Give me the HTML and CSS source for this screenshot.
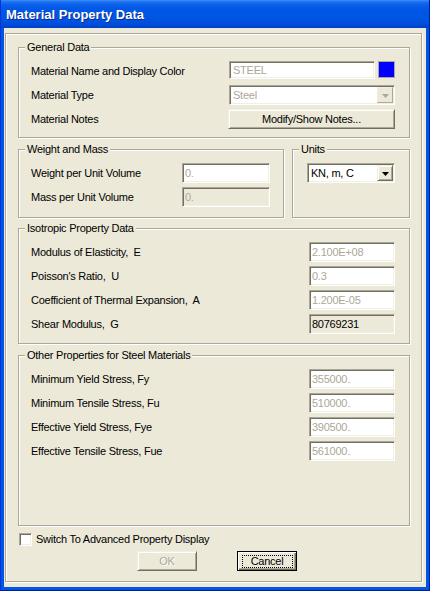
FILE: index.html
```html
<!DOCTYPE html>
<html>
<head>
<meta charset="utf-8">
<link rel="stylesheet" href="styles.css">
</head>
<body>
<div class="window">
  <div class="titlebar"><span class="title">Material Property Data</span></div>
  <div class="client">
    <div class="panel">
      <fieldset class="group general">
        <legend>General Data</legend>
        <div class="rows">
          <div class="row">
            <span class="label">Material Name and Display Color</span>
            <div class="name-ctrl">
              <div class="textbox dim name">STEEL</div>
              <div class="swatch"></div>
            </div>
          </div>
          <div class="row">
            <span class="label">Material Type</span>
            <div class="combo disabled wide">
              <span class="value">Steel</span>
              <span class="drop"><svg width="7" height="4" viewBox="0 0 7 4"><polygon points="0,0 7,0 3.5,4" fill="#aca899"/></svg></span>
            </div>
          </div>
          <div class="row">
            <span class="label">Material Notes</span>
            <div class="btn notes">Modify/Show Notes...</div>
          </div>
        </div>
      </fieldset>

      <div class="pair">
        <fieldset class="group weight">
          <legend>Weight and Mass</legend>
          <div class="rows">
            <div class="row">
              <span class="label">Weight per Unit Volume</span>
              <div class="textbox dim w88">0.</div>
            </div>
            <div class="row">
              <span class="label">Mass per Unit Volume</span>
              <div class="textbox dim ro w88">0.</div>
            </div>
          </div>
        </fieldset>
        <fieldset class="group units">
          <legend>Units</legend>
          <div class="rows">
            <div class="row unitrow">
              <div class="combo w88">
                <span class="value">KN, m, C</span>
                <span class="drop raised"><svg width="7" height="4" viewBox="0 0 7 4"><polygon points="0,0 7,0 3.5,4" fill="#000"/></svg></span>
              </div>
            </div>
          </div>
        </fieldset>
      </div>

      <fieldset class="group iso">
        <legend>Isotropic Property Data</legend>
        <div class="rows">
          <div class="row">
            <span class="label">Modulus of Elasticity,&nbsp; E</span>
            <div class="textbox dim w86">2.100E+08</div>
          </div>
          <div class="row">
            <span class="label">Poisson's Ratio,&nbsp; U</span>
            <div class="textbox dim w86">0.3</div>
          </div>
          <div class="row">
            <span class="label">Coefficient of Thermal Expansion,&nbsp; A</span>
            <div class="textbox dim w86">1.200E-05</div>
          </div>
          <div class="row">
            <span class="label">Shear Modulus,&nbsp; G</span>
            <div class="textbox ro w86">80769231</div>
          </div>
        </div>
      </fieldset>

      <fieldset class="group other">
        <legend>Other Properties for Steel Materials</legend>
        <div class="rows">
          <div class="row">
            <span class="label">Minimum Yield Stress, Fy</span>
            <div class="textbox dim w86">355000.</div>
          </div>
          <div class="row">
            <span class="label">Minimum Tensile Stress, Fu</span>
            <div class="textbox dim w86">510000.</div>
          </div>
          <div class="row">
            <span class="label">Effective Yield Stress, Fye</span>
            <div class="textbox dim w86">390500.</div>
          </div>
          <div class="row">
            <span class="label">Effective Tensile Stress, Fue</span>
            <div class="textbox dim w86">561000.</div>
          </div>
        </div>
      </fieldset>

      <div class="checkrow">
        <span class="checkbox"></span>
        <span class="checklabel">Switch To Advanced Property Display</span>
      </div>

      <div class="buttons">
        <div class="btn small disabled-btn">OK</div>
        <div class="btn small default-btn"><span class="focus">Cancel</span></div>
      </div>
    </div>
  </div>
</div>
</body>
</html>
```

FILE: styles.css
```css
html, body {
  margin: 0;
  padding: 0;
  background: #ece9d8;
}

body {
  font-family: "Liberation Sans", Arial, sans-serif;
  font-size: 11px;
  letter-spacing: -0.25px;
  color: #000;
}

.window {
  width: 430px;
  height: 591px;
  background: #0055e5;
  display: flex;
  flex-direction: column;
  box-sizing: border-box;
  border-left: 1px solid #0831d9;
  border-right: 1px solid #001ea0;
  border-bottom: 1px solid #001ea0;
}

.titlebar {
  height: 28px;
  flex: none;
  display: flex;
  align-items: center;
  padding-left: 5px;
  background: linear-gradient(to bottom, #3d8ff8 0px, #1a6ff0 2px, #0a5fea 5px, #0057e5 10px, #0054e2 20px, #004bd8 25px, #003fc5 28px);
}

.title {
  font-family: "Liberation Sans", Arial, sans-serif;
  font-size: 13px;
  font-weight: bold;
  letter-spacing: 0;
  color: #fff;
  text-shadow: 1px 1px 0 #0a2a8c;
  padding-top: 1px;
}

.client {
  flex: 1;
  margin: 0 3px 3px 3px;
  background: #ece9d8;
  display: flex;
  flex-direction: column;
}

.panel {
  margin: 5px 4px 0 1px;
  border: 1px solid #aca899;
  box-shadow: inset 1px 1px 0 #fff, 1px 1px 0 #fff;
  padding: 7px 11px 10px 12px;
  display: flex;
  flex-direction: column;
}

.group {
  margin: 0;
  padding: 7px 14px 9px 6px;
  border: 1px solid #aca899;
  box-shadow: inset 1px 1px 0 #fff, 1px 1px 0 #fff;
  min-width: 0;
}

.group legend {
  padding: 0 2px;
  margin: 0;
  font-size: 11px;
  line-height: 13px;
  height: 13px;
  background: #ece9d8;
}

.rows {
  display: flex;
  flex-direction: column;
  gap: 4px;
  padding-left: 6px;
}

.row {
  display: flex;
  align-items: center;
  height: 20px;
}

.label {
  flex: 1;
  line-height: 20px;
  white-space: nowrap;
}

.general {
  padding-bottom: 8px;
}

.pair {
  display: flex;
  gap: 8px;
  margin-top: 5px;
}

.weight {
  flex: none;
  width: 266px;
  box-sizing: border-box;
  padding-right: 13px;
  padding-bottom: 10px;
}

.units {
  flex: 1;
  padding-bottom: 10px;
}

.unitrow {
  padding-left: 2px;
}

.iso {
  margin-top: 4px;
  padding-bottom: 9px;
}

.other {
  margin-top: 5px;
  padding-bottom: 64px;
}

/* text boxes */
.textbox {
  box-sizing: border-box;
  height: 20px;
  line-height: 18px;
  padding-left: 2px;
  background: #fff;
  border-top: 1px solid #aca899;
  border-left: 1px solid #aca899;
  border-right: 1px solid #fff;
  border-bottom: 1px solid #fff;
  box-shadow: inset 1px 1px 0 #716f64, inset -1px -1px 0 #f1efe2;
  white-space: nowrap;
  overflow: hidden;
}

.textbox.dim {
  color: #aca899;
}

.textbox.ro {
  background: #ece9d8;
}

.w88 { width: 88px; }
.w86 { width: 86px; }

.name-ctrl {
  display: flex;
  gap: 3px;
  width: 166px;
  height: 20px;
  align-items: flex-start;
}

.textbox.name {
  width: 146px;
  height: 18px;
  line-height: 16px;
  padding-left: 3px;
}

.swatch {
  width: 15px;
  height: 15px;
  background: #0000ff;
  border: 1px solid #aca899;
}

/* combos */
.combo {
  box-sizing: border-box;
  display: flex;
  align-items: center;
  height: 20px;
  background: #fff;
  border-top: 1px solid #aca899;
  border-left: 1px solid #aca899;
  border-right: 1px solid #fff;
  border-bottom: 1px solid #fff;
  box-shadow: inset 1px 1px 0 #716f64, inset -1px -1px 0 #f1efe2;
  padding: 1px 1px 1px 1px;
}

.combo.wide {
  width: 166px;
}

.combo .value {
  flex: 1;
  padding-left: 2px;
  line-height: 16px;
  white-space: nowrap;
}

.combo.disabled .value {
  color: #aca899;
}

.drop {
  box-sizing: border-box;
  width: 16px;
  height: 16px;
  display: flex;
  align-items: center;
  justify-content: center;
  background: #ece9d8;
  border: 1px solid;
  border-color: #f1efe2 #aca899 #aca899 #f1efe2;
}

.drop.raised {
  border-color: #f1efe2 #716f64 #716f64 #f1efe2;
  box-shadow: inset 1px 1px 0 #fff, inset -1px -1px 0 #aca899;
}

.drop svg {
  display: block;
  margin-top: 1px;
}

/* buttons */
.btn {
  box-sizing: border-box;
  height: 20px;
  display: flex;
  align-items: center;
  justify-content: center;
  background: #ece9d8;
  border: 1px solid;
  border-color: #f1efe2 #716f64 #716f64 #f1efe2;
  box-shadow: inset 1px 1px 0 #fff, inset -1px -1px 0 #aca899;
  white-space: nowrap;
}

.btn.notes {
  width: 167px;
}

.btn.small {
  width: 60px;
}

.disabled-btn {
  color: #aca899;
  text-shadow: 1px 1px 0 #fff;
}

.default-btn {
  border-color: #000;
  box-shadow: inset 1px 1px 0 #fff, inset -1px -1px 0 #716f64, inset -2px -2px 0 #aca899;
}

.focus {
  box-sizing: border-box;
  width: 51px;
  height: 13px;
  line-height: 11px;
  border: 1px dotted #000;
  text-align: center;
}

/* checkbox */
.checkrow {
  display: flex;
  align-items: center;
  gap: 4px;
  margin-top: 7px;
  margin-left: 1px;
  height: 13px;
}

.checkbox {
  box-sizing: border-box;
  width: 13px;
  height: 13px;
  background: #fff;
  border-top: 1px solid #aca899;
  border-left: 1px solid #aca899;
  border-right: 1px solid #fff;
  border-bottom: 1px solid #fff;
  box-shadow: inset 1px 1px 0 #716f64, inset -1px -1px 0 #f1efe2;
}

.checklabel {
  line-height: 13px;
}

.buttons {
  display: flex;
  gap: 40px;
  margin-top: 5px;
  padding-left: 119px;
}
```
